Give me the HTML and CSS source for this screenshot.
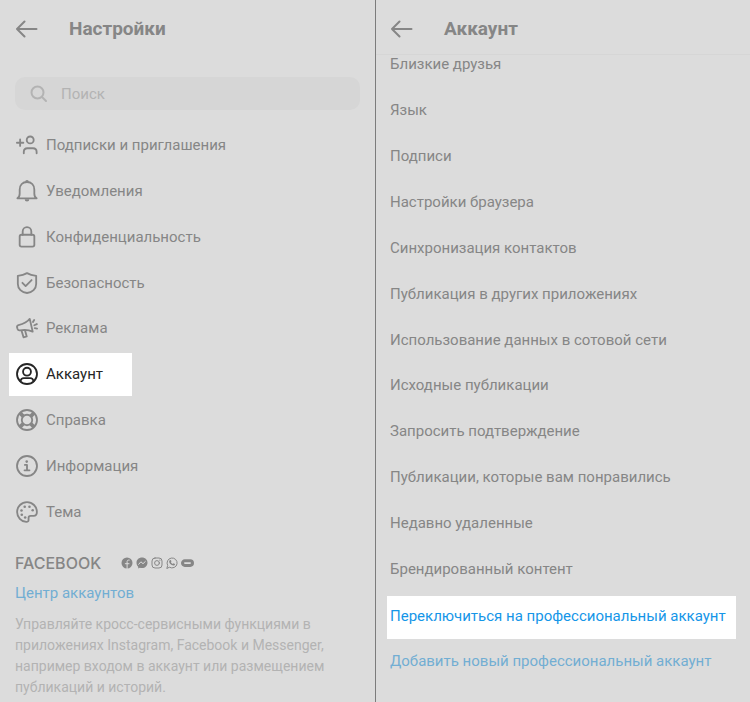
FILE: index.html
```html
<!DOCTYPE html>
<html lang="ru">
<head>
<meta charset="utf-8">
<meta name="viewport" content="width=device-width, initial-scale=1">
<title>Настройки</title>
<link rel="stylesheet" href="styles.css">
</head>
<body>
<main class="screens">
  <section class="pane pane-settings">
    <header class="bar">
      <button class="back" type="button" aria-label="Назад">
        <svg width="22" height="18" viewBox="0 0 22 18"><path d="M8.500 1.500 1 9 8.500 16.500M1 9H20.500"/></svg>
      </button>
      <h1>Настройки</h1>
    </header>
    <label class="search">
      <svg width="18" height="18" viewBox="0 0 18 18"><circle cx="7.500" cy="7.500" r="6"/><path d="m12 12 4 4"/></svg>
      <input type="search" placeholder="Поиск" aria-label="Поиск">
    </label>
    <nav class="menu">
      <a href="#follow"><svg viewBox="0 0 24 24"><circle cx="15.500" cy="6.500" r="3.800"/><path d="M8.500 21v-1.500c0-2.500 1.600-4 4-4h6c2.400 0 4 1.500 4 4V21M1 9.500h7M4.500 6v7"/></svg>Подписки и приглашения</a>
      <a href="#notifications"><svg viewBox="0 0 24 24"><path d="M1.500 20h21c-1.700-1-2.500-2.500-2.500-5V10.500c0-5-3.200-8.300-8-8.300s-8 3.300-8 8.300V15c0 2.500-.8 4-2.500 5Z"/><path class="solid" d="M10 2a2 2 0 0 1 4 0zM9.500 21h5a2.500 2.500 0 0 1-5 0Z"/></svg>Уведомления</a>
      <a href="#privacy"><svg viewBox="0 0 24 24"><rect x="4" y="9.500" width="16" height="13" rx="2"/><path d="M7.300 9.500V6a4.700 4.700 0 0 1 9.400 0v3.500"/></svg>Конфиденциальность</a>
      <a href="#security"><svg viewBox="0 0 24 24"><path d="M12 1.200C9 3 6 3.800 2 4.200V13c0 5.300 4.200 9.200 10 9.900 5.800-.7 10-4.600 10-9.900V4.200C18 3.800 15 3 12 1.200Z"/><path d="m7 11.800 3.500 3.500L17 8.800"/></svg>Безопасность</a>
      <a href="#ads"><svg viewBox="0 0 24 24"><path d="M15 2c-2.500 3.500-6 5.500-12.300 6.800-1.200.3-1.900 1.300-1.500 2.500l.5 1.700c.4 1.200 1.300 1.700 2.500 1.500 5-1 9.500-.8 14 1.500ZM6 14.700l2.200 7.500 3.500-1-1.900-6.700"/><path d="m18.500 5.500 1.300-2.300M20 9l2.700-1.300M20.500 12.200l2.500.5"/></svg>Реклама</a>
      <a class="current" href="#account" aria-current="page"><svg viewBox="0 0 24 24"><circle cx="12" cy="12" r="10.900"/><circle cx="12" cy="9.500" r="4.300"/><path d="M4.800 19.900c.5-2.500 1.600-3.400 3.700-3.400h7c2.100 0 3.200.9 3.700 3.400"/></svg>Аккаунт</a>
      <a href="#help"><svg viewBox="0 0 24 24"><circle cx="12" cy="12" r="10.900"/><circle cx="12" cy="12" r="5.700"/><path class="thick" d="m4.500 4.500 3.500 3.500m8 8 3.500 3.500m0-15-3.500 3.500m-8 8-3.500 3.500"/></svg>Справка</a>
      <a href="#about"><svg viewBox="0 0 24 24"><circle cx="12" cy="12" r="10.900"/><path d="M9.700 10.800H12v5.900M9.300 16.700h5.400"/><circle class="solid" cx="11.700" cy="7.200" r="1.400"/></svg>Информация</a>
      <a href="#theme"><svg viewBox="0 0 24 24"><path d="M12 1.200A10.800 10.800 0 0 0 1.200 12c0 5.700 4.500 10.400 10 10.800 1.700.1 2.500-.8 2.500-2v-2.300c0-1.500.8-2.300 2.300-2.300h3.200c2.300 0 3.600-1.700 3.600-4.200A10.800 10.800 0 0 0 12 1.200Z"/><g class="solid"><circle cx="9.500" cy="6.300" r="1.400"/><circle cx="14.700" cy="6.300" r="1.400"/><circle cx="18.200" cy="10" r="1.400"/><circle cx="6" cy="10.300" r="1.400"/><circle cx="6.300" cy="15" r="1.400"/><circle cx="10" cy="18" r="1.400"/></g></svg>Тема</a>
    </nav>
    <footer class="family">
      <div class="brands">
        <span class="wordmark">FACEBOOK</span>
        <svg viewBox="0 0 12 12"><circle class="solid" cx="6" cy="6" r="5.500"/><path class="cut-line" d="M8.200 3.100H7.600c-1 0-1.500.5-1.500 1.500V12M4.300 6.700H8"/></svg>
        <svg viewBox="0 0 12 12"><path class="solid" d="M6 .6C2.900.6.5 2.800.5 5.800c0 1.700.7 3 1.700 4v1.700l1.600-.8c.7.2 1.400.4 2.200.4 3.100 0 5.500-2.300 5.500-5.300S9.100.6 6 .6Z"/><path class="cut-line" d="m2.700 7.300 2.200-2.500L7 6.700l2.300-2.200"/></svg>
        <svg viewBox="0 0 12 12"><rect x="1" y="1" width="10" height="10" rx="3"/><circle cx="6" cy="6" r="2.400"/><circle class="solid" cx="8.900" cy="3.100" r=".7"/></svg>
        <svg viewBox="0 0 12 12"><path d="m.9 11.200.8-2.800A5 5 0 1 1 3.700 10.400Z"/><path class="solid" d="M3.800 3.200c.6-.6 1-.3 1.300.4l.3.800-.5.8c.4.900 1 1.400 1.900 1.800l.7-.7 1.500.7c.1 1-.7 1.600-1.600 1.500C5.200 8.200 3 6.200 3.200 4.200c0-.4.300-.8.600-1Z"/></svg>
        <svg class="wide" viewBox="0 0 13 12"><rect class="ring" x="1.500" y="3.800" width="10" height="4.600" rx="2.300"/></svg>
      </div>
      <a class="accent" href="#center">Центр аккаунтов</a>
      <p>Управляйте кросс-сервисными функциями в приложениях Instagram, Facebook и Messenger, например входом в аккаунт или размещением публикаций и историй.</p>
    </footer>
  </section>
  <section class="pane pane-account">
    <header class="bar">
      <button class="back" type="button" aria-label="Назад">
        <svg width="22" height="18" viewBox="0 0 22 18"><path d="M8.500 1.500 1 9 8.500 16.500M1 9H20.500"/></svg>
      </button>
      <h2>Аккаунт</h2>
    </header>
    <nav class="menu">
      <a href="#friends">Близкие друзья</a>
      <a href="#language">Язык</a>
      <a href="#captions">Подписи</a>
      <a href="#browser">Настройки браузера</a>
      <a href="#contacts">Синхронизация контактов</a>
      <a href="#sharing">Публикация в других приложениях</a>
      <a href="#data">Использование данных в сотовой сети</a>
      <a href="#original">Исходные публикации</a>
      <a href="#verify">Запросить подтверждение</a>
      <a href="#liked">Публикации, которые вам понравились</a>
      <a href="#deleted">Недавно удаленные</a>
      <a href="#branded">Брендированный контент</a>
      <a class="current accent" href="#switch">Переключиться на профессиональный аккаунт</a>
      <a class="accent" href="#add">Добавить новый профессиональный аккаунт</a>
    </nav>
  </section>
</main>
</body>
</html>
```
FILE: styles.css
```css
* {
  box-sizing: border-box;
}

body {
  margin: 0;
  background: #dcdcdc;
  color: #868686;
  font: 15px/20px Roboto, "Liberation Sans", sans-serif;
}

a {
  color: inherit;
  text-decoration: none;
}

svg {
  flex: none;
  fill: none;
  stroke: currentColor;
  stroke-width: 2;
  stroke-linecap: round;
  stroke-linejoin: round;
}

.solid {
  fill: currentColor;
  stroke: none;
}

.screens {
  display: grid;
  grid-template-columns: 1fr 1fr;
  min-height: 100vh;
}

.pane {
  display: flex;
  flex-direction: column;
}

.pane-settings {
  padding: 0 15px 4px;
}

.pane-account {
  border-left: 1px solid #7c7c7c;
  padding-bottom: 18px;
}

.bar {
  display: flex;
  align-items: center;
  gap: 31px;
  height: 55px;
  padding: 3px 0 0 1px;
}

.pane-account .bar {
  padding-left: 15px;
  border-bottom: 1px solid #d6d6d6;
}

.bar h1,
.bar h2 {
  margin: 0;
  font-size: 19px;
  line-height: 24px;
  font-weight: 700;
}

.back {
  display: flex;
  padding: 0;
  border: 0;
  background: none;
  color: inherit;
}

.search {
  display: flex;
  align-items: center;
  gap: 13px;
  height: 33px;
  margin: 22px 0 12px;
  padding: 0 15px;
  border-radius: 10px;
  background: #d6d6d6;
  color: #b3b3b3;
}

.search input {
  flex: 1;
  min-width: 0;
  padding: 0;
  border: 0;
  outline: 0;
  background: none;
  color: inherit;
  font: inherit;
}

.search input::placeholder {
  color: inherit;
}

.menu {
  flex: 1;
  display: grid;
  grid-auto-rows: 1fr;
}

.menu a {
  display: flex;
  align-items: center;
  gap: 8px;
}

.menu svg {
  width: 22px;
  height: 22px;
}

.menu .thick {
  stroke-width: 4;
  stroke-linecap: butt;
}

.menu .current {
  justify-self: start;
  background: #fff;
  color: #262626;
}

.pane-settings .menu {
  padding-left: 1px;
}

.pane-settings .current {
  margin: 2px 0 1px -7px;
  padding: 0 29px 2px 7px;
}

.pane-account .menu {
  margin-top: -14px;
  padding: 0 13px 0 14px;
}

.pane-account .current {
  margin: 4px 0 -1px -3px;
  padding: 0 10px 4px 3px;
}

.accent {
  color: #72aed3;
}

.menu .current.accent {
  color: #1596e8;
}

.family {
  padding-top: 18px;
}

.brands {
  display: flex;
  align-items: center;
  gap: 3px;
  margin-bottom: 10px;
}

.brands svg {
  width: 12px;
  height: 12px;
  stroke-width: 1;
}

.brands .wide {
  width: 13px;
}

.wordmark {
  min-width: 103px;
  font: 500 16px/20px Inter, "DejaVu Sans", sans-serif;
}

.brands .cut-line {
  stroke: #dcdcdc;
}

.brands .ring {
  stroke-width: 3;
}

.family p {
  max-width: 320px;
  margin: 11px 0 0;
  color: #b3b3b3;
  font-size: 14px;
  line-height: 21px;
}
```
